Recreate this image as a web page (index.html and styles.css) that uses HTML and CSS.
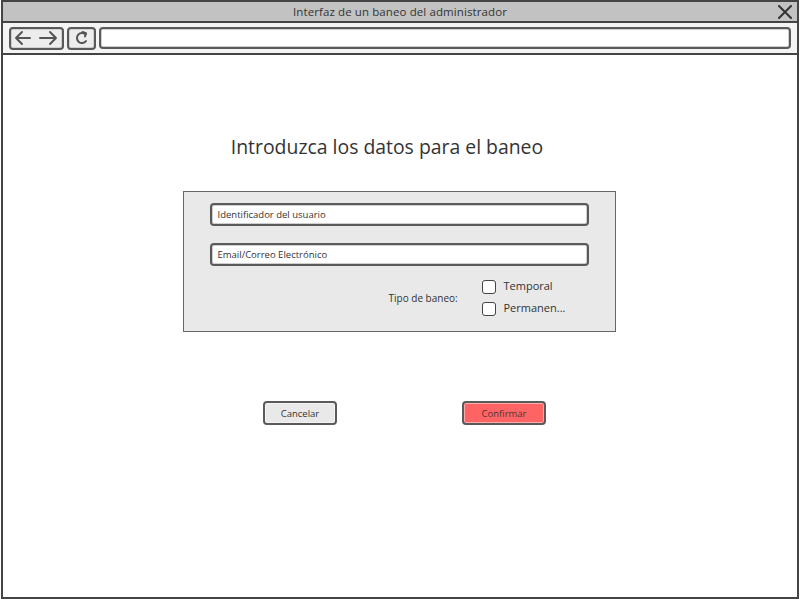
FILE: index.html
```html
<!DOCTYPE html>
<html lang="es">
<head>
<meta charset="utf-8">
<title>Interfaz de un baneo del administrador</title>
<link rel="stylesheet" href="styles.css">
</head>
<body>
<div class="window">
  <div class="titlebar">
    <span class="title">Interfaz de un baneo del administrador</span>
    <svg class="close" width="16" height="14" viewBox="0 0 16 14"><path d="M2 1 L14 13 M14 1 L2 13" stroke="#333" stroke-width="2" fill="none" stroke-linecap="round"/></svg>
  </div>
  <div class="toolbar">
    <div class="btn nav">
      <svg width="48" height="16" viewBox="0 0 48 16"><path d="M3 8 H17 M3 8 L9 2 M3 8 L9 14" stroke="#555" stroke-width="2" fill="none" stroke-linecap="round" stroke-linejoin="round"/><path d="M27 8 H43 M43 8 L37 2 M43 8 L37 14" stroke="#555" stroke-width="2" fill="none" stroke-linecap="round" stroke-linejoin="round"/></svg>
    </div>
    <div class="btn refresh">
      <svg width="16" height="16" viewBox="0 0 16 16"><path d="M11.5 4.5 A5 5 0 1 0 12 11" stroke="#555" stroke-width="2" fill="none" stroke-linecap="round"/><path d="M8.5 2 L12 3.2 L11 6.5" stroke="#555" stroke-width="2" fill="none" stroke-linecap="round" stroke-linejoin="round"/></svg>
    </div>
    <div class="address"></div>
  </div>
  <div class="content">
    <h1 class="heading">Introduzca los datos para el baneo</h1>
    <div class="panel">
      <div class="field">Identificador del usuario</div>
      <div class="field">Email/Correo Electrónico</div>
      <div class="type-row">
        <span class="type-label">Tipo de baneo:</span>
        <div class="checks">
          <label class="check"><span class="box"></span>Temporal</label>
          <label class="check"><span class="box"></span>Permanen...</label>
        </div>
      </div>
    </div>
    <div class="actions">
      <button class="action cancel">Cancelar</button>
      <button class="action confirm">Confirmar</button>
    </div>
  </div>
</div>
</body>
</html>
```
FILE: styles.css
```css
* { box-sizing: border-box; }
html, body { margin: 0; padding: 0; background: #fff; }
body {
  width: 800px;
  height: 601px;
  font-family: "Open Sans", "DejaVu Sans", sans-serif;
  color: #333;
}
.window {
  margin: 0 1px 0 1px;
  height: 599px;
  border: 2px solid #444;
  display: flex;
  flex-direction: column;
  background: #fff;
}
.titlebar {
  height: 21px;
  background: #c2c2c2;
  border-bottom: 2px solid #444;
  display: flex;
  align-items: center;
  justify-content: center;
  position: relative;
}
.title {
  font-size: 11.5px;
  color: #333;
  letter-spacing: 0.1px;
}
.close {
  position: absolute;
  right: 4px;
  top: 3px;
}
.toolbar {
  height: 32px;
  background: #f4f4f4;
  border-bottom: 2px solid #444;
  display: flex;
  align-items: center;
  padding: 0 6px 0 6px;
  gap: 3px;
}
.btn {
  height: 23px;
  border: 2px solid #5a5a5a;
  border-radius: 4px;
  background: #ededed;
  box-shadow: inset 0 0 0 1px #d0d0d0;
  display: flex;
  align-items: center;
  justify-content: center;
}
.nav { width: 55px; }
.refresh { width: 29px; }
.address {
  flex: 1;
  height: 22px;
  border: 2px solid #5a5a5a;
  border-radius: 4px;
  background: #fff;
  box-shadow: inset 0 0 0 1px #cfcfcf;
}
.content {
  flex: 1;
  display: flex;
  flex-direction: column;
  align-items: center;
  padding-top: 80px;
}
.heading {
  margin: 0 26px 0 0;
  font-weight: normal;
  font-size: 19.4px;
  line-height: 24px;
  color: #333;
}
.panel {
  margin: 32px 2px 0 0;
  width: 433px;
  height: 141px;
  background: #e9e9e9;
  border: 1px solid #666;
  padding: 11px 26px 0 26px;
  display: flex;
  flex-direction: column;
  gap: 17px;
}
.field {
  height: 23px;
  border: 2px solid #5a5a5a;
  border-radius: 4px;
  background: #fff;
  box-shadow: inset 0 0 0 1px #cfcfcf;
  font-size: 9.5px;
  line-height: 19px;
  padding-left: 6px;
  color: #333;
}
.type-row {
  display: flex;
  align-items: center;
  margin-top: -6px;
  padding-left: 179px;
}
.type-label {
  font-size: 10px;
  width: 93px;
  margin-top: 3px;
}
.checks {
  display: flex;
  flex-direction: column;
  gap: 5px;
}
.check {
  display: flex;
  align-items: center;
  gap: 8px;
  font-size: 11px;
  color: #333;
}
.box {
  width: 14px;
  height: 14px;
  border: 1.5px solid #444;
  border-radius: 3px;
  background: #fff;
  margin-top: 3px;
}
.actions {
  align-self: stretch;
  display: flex;
  padding-left: 260px;
  gap: 125px;
  margin-top: 69px;
}
.action {
  height: 24px;
  border: 2px solid #5a5a5a;
  border-radius: 4px;
  font-family: inherit;
  font-size: 9.5px;
  color: #333;
  padding: 0;
  box-shadow: inset 0 0 0 1px rgba(255,255,255,0.45);
}
.cancel { width: 74px; background: #e9e9e9; }
.confirm { width: 84px; background: #ff6464; color: #553333; }
```
